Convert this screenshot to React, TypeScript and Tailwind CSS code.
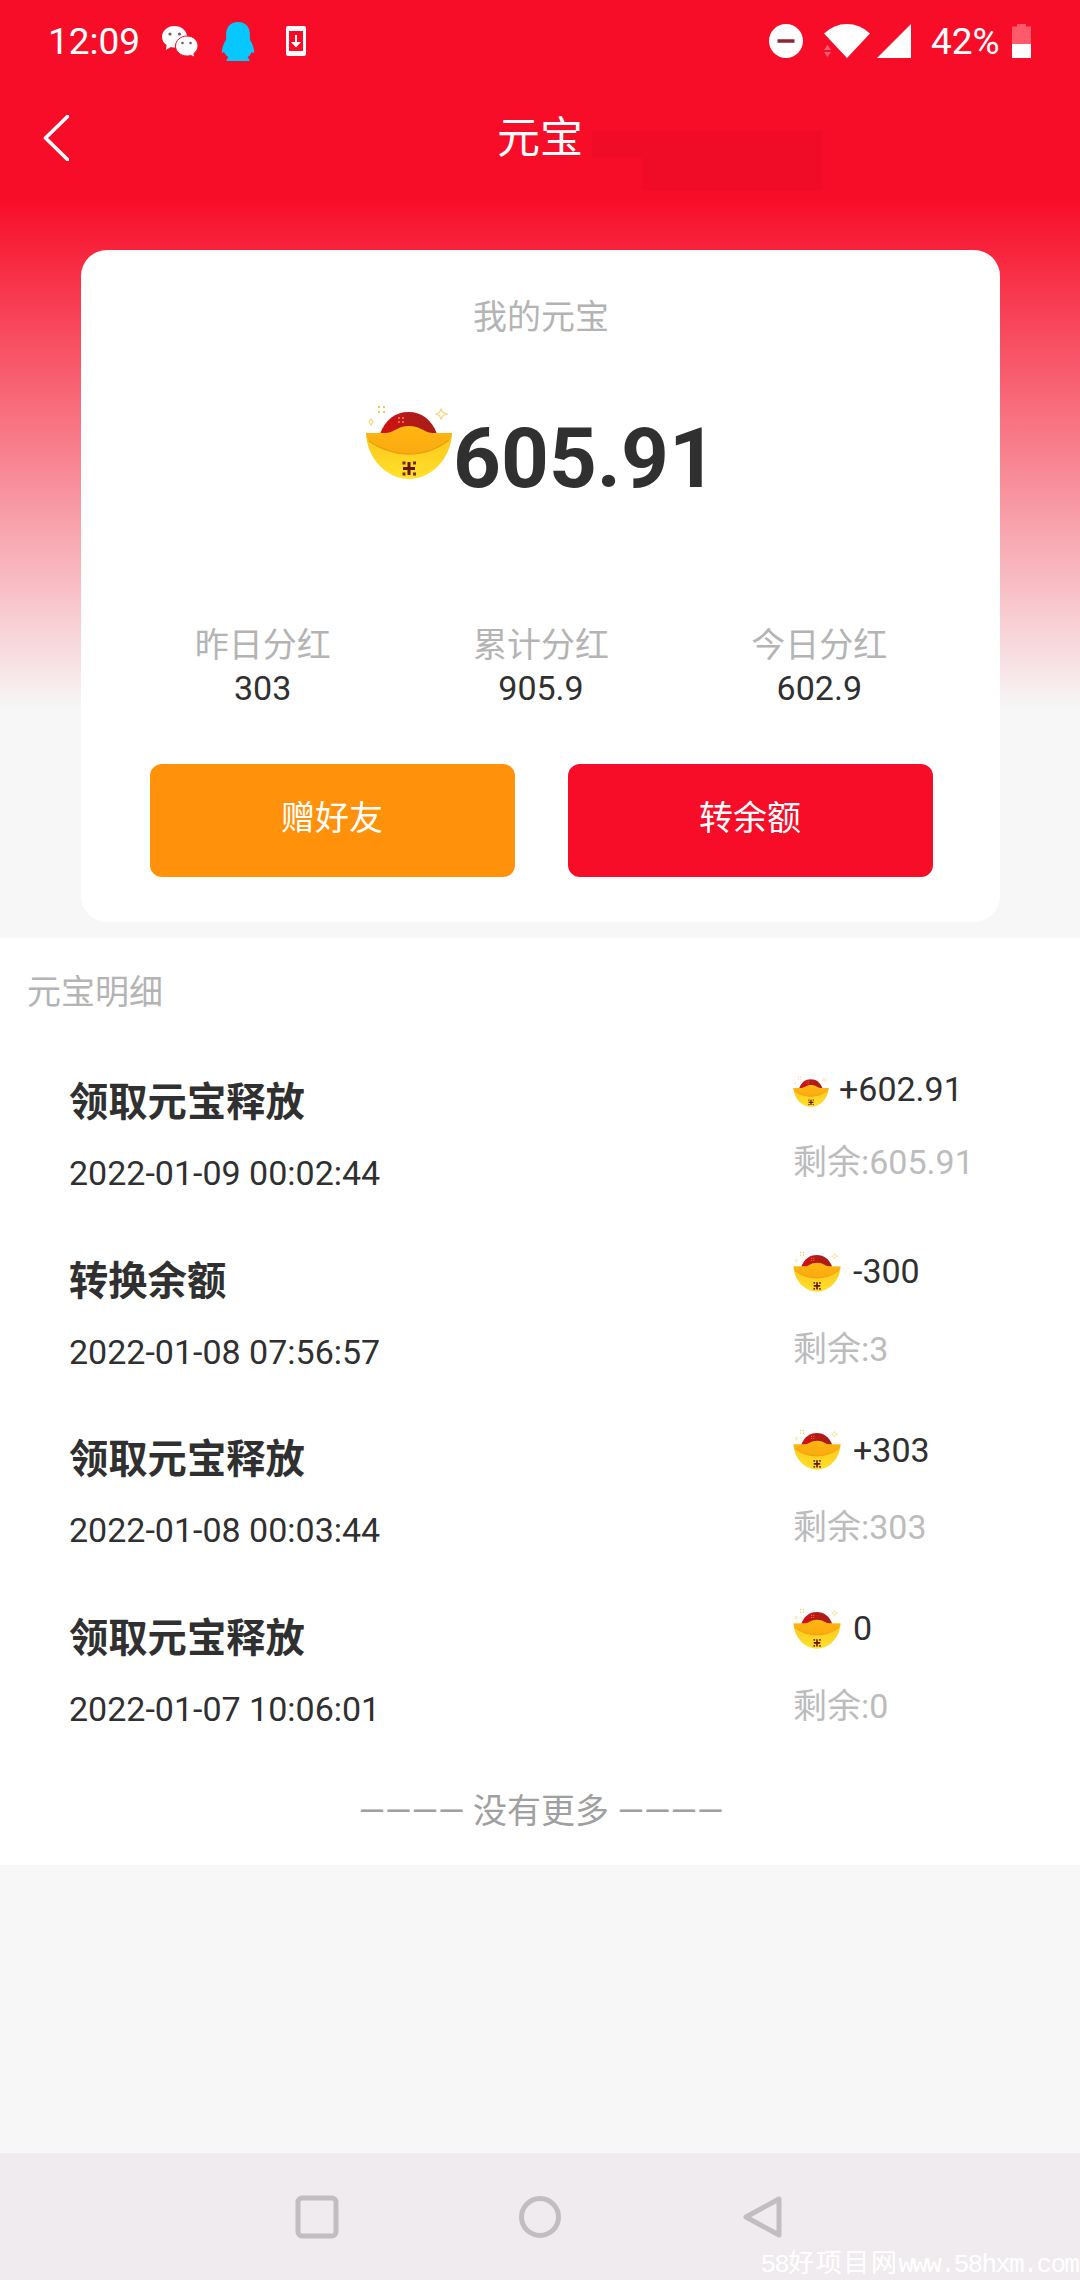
const STATS = [
  { label: "昨日分红", value: "303" },
  { label: "累计分红", value: "905.9" },
  { label: "今日分红", value: "602.9" },
];

const RECORDS = [
  { title: "领取元宝释放", time: "2022-01-09 00:02:44", amount: "+602.91", rest: "605.91", small: true },
  { title: "转换余额", time: "2022-01-08 07:56:57", amount: "-300", rest: "3", small: false },
  { title: "领取元宝释放", time: "2022-01-08 00:03:44", amount: "+303", rest: "303", small: false },
  { title: "领取元宝释放", time: "2022-01-07 10:06:01", amount: "0", rest: "0", small: false },
];

const Ingot = ({ className }: { className: string }) => (
  <svg viewBox="0 0 88 88" className={className}>
    <defs>
      <linearGradient id="dome" x1="0" x2="1" y1="0" y2="0">
        <stop offset="0" stopColor="#d8100f" />
        <stop offset="0.5" stopColor="#b51a17" />
        <stop offset="1" stopColor="#a81d1a" />
      </linearGradient>
      <linearGradient id="rim" x1="0" x2="0" y1="0" y2="1">
        <stop offset="0" stopColor="#ffb612" />
        <stop offset="1" stopColor="#fbaa10" />
      </linearGradient>
      <linearGradient id="bowl" x1="0" x2="0" y1="0" y2="1">
        <stop offset="0" stopColor="#fcc51a" />
        <stop offset="1" stopColor="#ffe12c" />
      </linearGradient>
    </defs>
    <path d="M15 35C20 21 30 13 43.500 13S67 21 72 35Z" fill="url(#dome)" />
    <path d="M1 34H87C86 60 66 80 44 80S2 60 1 34Z" fill="url(#bowl)" />
    <path d="M1 34H21C31 33 32 27 44 27S58 33 67 34H87Q87 38 84 41Q66 55 44 55T4 42Q1 38 1 34Z" fill="url(#rim)" />
    <path d="M4 42Q22 55 44 55T84 41" fill="none" stroke="#e99f10" strokeWidth="1.500" />
    <path d="M44 63V76M38 69.500H50" stroke="#651405" strokeWidth="3" />
    <path d="M37.500 62.500h3v3h-3zM48 62.500h3v3h-3zM37.500 73.500h3v3h-3zM48 73.500h3v3h-3z" fill="#7a2806" />
    <g fill="none" stroke="#f0d878" strokeWidth="1.200">
      <path d="M76 10L78 13.500L82 15L78 16.500L76 20L74.500 16.500L71 15L74.500 13.500Z" />
      <path d="M6 20L8 23L6 26L4 23Z" />
    </g>
    <path d="M13 7h2v2h-2zM18 7h2v2h-2zM13 12h2v2h-2zM18 12h2v2h-2z" fill="#eacb55" />
    <path d="M33 18h2v2h-2zM37 18h2v2h-2zM33 22h2v2h-2zM37 22h2v2h-2z" fill="#f0653a" />
  </svg>
);

const StatusBar = () => (
  <div className="flex h-[82px] items-center justify-between pl-[48px] pr-[49px] text-[37px] leading-none text-white">
    <div className="flex items-center">
      <span className="w-[92px]">12:09</span>
      <svg viewBox="0 0 36 31" className="ml-[22px] h-[31px] w-9">
        <path d="M12.500 0C5.500 0 0 4.800 0 10.800c0 3.500 1.700 6.300 4.600 8.300L3.800 24l5-2.900c1.300.4 2.400.5 3.700.5C19.500 21.600 25 16.800 25 10.800S19.500 0 12.500 0Z" fill="#fff" />
        <path d="M25 10C18.500 10 13.500 14.500 13.500 20S18.500 30 25 30c1.300 0 2.500-.2 3.700-.6l4 1.900-.8-3.900c2.500-1.800 4.100-4.400 4.100-7.400C36 14.500 31.500 10 25 10Z" fill="#fff" stroke="#f80d28" strokeWidth="1" />
        <g fill="#64606c">
          <circle cx="8" cy="8" r="1.600" />
          <circle cx="17.500" cy="8" r="1.600" />
          <circle cx="20.500" cy="17" r="1.300" />
          <circle cx="28.500" cy="17" r="1.300" />
        </g>
      </svg>
      <svg viewBox="0 0 34 41" className="ml-[23px] h-[39px] w-[34px]">
        <path d="M17 0C9.500 0 4.500 5 4.500 13v5.500C2 22.500 0 28 0 31.500c0 1.500 1 1 2 0L4.500 35l2.500 2-2 2.500V41h24v-1.500L27 37l2.500-2 2-3.500c1 1 2.500 1.500 2.500 0 0-3.500-2-9-4.500-13V13C29.500 5 24.500 0 17 0Z" fill="#06c8ff" />
      </svg>
      <svg viewBox="0 0 20 30" className="ml-[31px] h-[30px] w-5">
        <path fillRule="evenodd" d="M2 0H18Q20 0 20 2V28Q20 30 18 30H2Q0 30 0 28V2Q0 0 2 0ZM3 5V25H17V5Z" fill="#fff" />
        <path d="M9 9H11V16H15L10 21.500L5 16H9Z" fill="#fff" />
      </svg>
    </div>
    <div className="flex items-center">
      <svg viewBox="0 0 34 34" className="size-[34px]">
        <circle cx="17" cy="17" r="17" fill="#fff" />
        <path d="M8.500 17H25.500" stroke="#8c2635" strokeWidth="3.500" />
      </svg>
      <svg viewBox="0 0 46 34" className="ml-[21px] h-[34px] w-[46px]">
        <path d="M0 9.500Q10 0 23 0T46 9.500L23 34Z" fill="#fff" />
        <path d="M0 26L3.500 21L7 26ZM0 28H7L3.500 33Z" fill="#ff6072" />
      </svg>
      <svg viewBox="0 0 34 34" className="ml-[7px] size-[34px]">
        <path d="M34 0V34H0Z" fill="#fff" />
      </svg>
      <span className="ml-[20px] w-[81px] text-[37px]">42%</span>
      <svg viewBox="0 0 19 34" className="h-[34px] w-[19px]">
        <path d="M5 0H14V2.500H19V20H0V2.500H5Z" fill="#ff5a6c" />
        <path d="M0 20H19V34H0Z" fill="#fff" />
      </svg>
    </div>
  </div>
);

const TitleBar = () => (
  <div className="relative flex h-[110px] items-center justify-center">
    <svg viewBox="0 0 230 60" className="absolute left-[592px] top-[49px] h-[60px] w-[230px]">
      <path d="M0 0H230V60H50V27H0Z" fill="#f00c26" />
    </svg>
    <svg viewBox="0 0 26 46" className="absolute left-[43px] top-[33px] h-[46px] w-[26px]" fill="none" stroke="#fff" strokeWidth="3.600">
      <path d="M24.500 1.500L2.500 23L24.500 44.500" strokeLinecap="round" strokeLinejoin="round" />
    </svg>
    <h1 className="pt-0.5 text-[43px] leading-none text-white">元宝</h1>
  </div>
);

const BalanceCard = () => (
  <div className="mx-auto mt-[58px] h-[672px] w-[919px] rounded-[26px] bg-white pl-[43px] pr-[41px] pt-[45px]">
    <p className="text-center text-[34px] leading-[44px] text-[#b4b4b4]">我的元宝</p>
    <div className="mt-[60px] flex h-[110px] justify-center">
      <Ingot className="size-[88px]" />
      <span className="pt-2 text-[83.5px] font-bold leading-[104px] text-[#303030]">605.91</span>
    </div>
    <div className="mt-[114px] flex">
      {STATS.map((stat) => (
        <div key={stat.label} className="flex-1 text-center text-[34px]">
          <p className="leading-[44px] text-[#b4b4b4]">{stat.label}</p>
          <p className="leading-[42px] text-[#303030]">{stat.value}</p>
        </div>
      ))}
    </div>
    <div className="mt-[55px] flex justify-between px-[26px] text-[34px] text-white">
      <button className="h-[113px] w-[365px] rounded-xl bg-[#ff910b] pb-1">赠好友</button>
      <button className="h-[113px] w-[365px] rounded-xl bg-[#f80d28] pb-1">转余额</button>
    </div>
  </div>
);

const RecordList = () => (
  <section className="h-[927px] bg-white pt-[32px]">
    <h2 className="pl-[27px] text-[34px] leading-[44px] text-[#b4b4b4]">元宝明细</h2>
    <div className="pt-[52px]">
      {RECORDS.map((item) => (
        <div key={item.time} className="flex h-[178.500px] justify-between pl-[69px] text-[34px] text-[#303030]">
          <div>
            <h3 className="pt-[12px] text-[39.300px] font-bold leading-[50px]">{item.title}</h3>
            <p className="mt-[23px] leading-[44px]">{item.time}</p>
          </div>
          <div className="w-[287px]">
            <div className={item.small ? "flex h-[46px] items-center" : "flex h-[54px] items-center"}>
              {item.small ? <Ingot className="mt-1.5 size-9" /> : <Ingot className="size-12" />}
              <span className={item.small ? "ml-2.5" : "ml-3"}>{item.amount}</span>
            </div>
            <p className="mt-[28px] leading-[44px] text-[#bcbcbc]">剩余:{item.rest}</p>
          </div>
        </div>
      ))}
    </div>
    <p className="pl-0.5 pt-[9px] text-center text-[34px] leading-[44px] text-[#a0a0a0]">———— 没有更多 ————</p>
  </section>
);

const NavBar = () => (
  <div className="relative flex h-[127px] items-center justify-center gap-[179px] bg-[#f0ebee]">
    <svg viewBox="0 0 44 44" className="size-11" fill="none" stroke="#c1bec1" strokeWidth="5">
      <rect x="3" y="3" width="38" height="38" rx="4" />
    </svg>
    <svg viewBox="0 0 44 44" className="size-11" fill="none" stroke="#c1bec1" strokeWidth="5">
      <circle cx="22" cy="22" r="18.500" />
    </svg>
    <svg viewBox="0 0 44 44" className="size-11" fill="none" stroke="#c1bec1" strokeWidth="5" strokeLinejoin="round">
      <path d="M38 4V40L5 22Z" />
    </svg>
    <p className="absolute bottom-[-2px] right-[2px] whitespace-nowrap font-['Liberation_Mono','Noto_Sans_CJK_SC',monospace] text-[26px] leading-[34px] tracking-[-1.800px] text-white">
      58<span className="tracking-[1.600px]">好项目网</span>www.58hxm.com
    </p>
  </div>
);

export default function App() {
  return (
    <div className="flex h-[2280px] w-[1080px] flex-col overflow-hidden bg-[#f7f7f7] font-['Roboto','Noto_Sans_CJK_SC',sans-serif]">
      <div className="h-[938px] bg-[linear-gradient(180deg,#f80d28_0px,#f80d28_200px,#f7f7f7_710px)]">
        <StatusBar />
        <TitleBar />
        <BalanceCard />
      </div>
      <RecordList />
      <div className="flex-1" />
      <NavBar />
    </div>
  );
}
